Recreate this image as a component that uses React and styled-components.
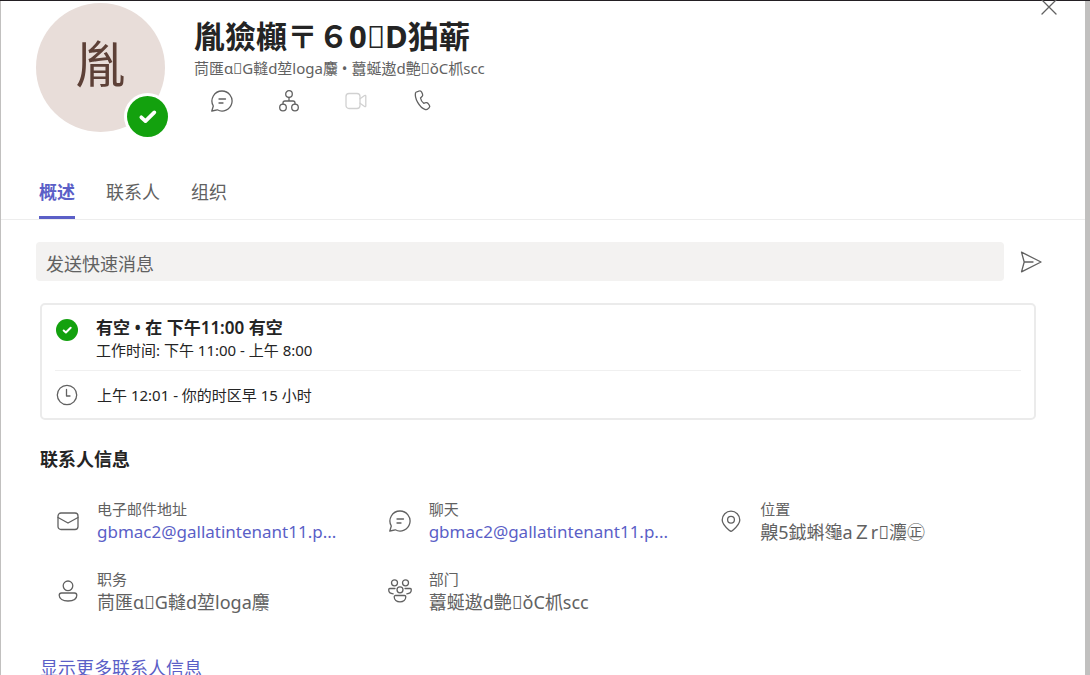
import React from 'react';
import styled, { createGlobalStyle, css } from 'styled-components';

const Global = createGlobalStyle`
  *, *::before, *::after { box-sizing: border-box; }
  html, body { margin: 0; height: 100%; }
  body {
    overflow: hidden;
    background: #c1c0bf;
    color: #242424;
    font-family: "Noto Sans", "Noto Sans CJK SC", sans-serif;
  }
  #root { height: 100%; }
  button, input { font: inherit; }
  h1, h2, p, dl, dt, dd { margin: 0; }
`;

const Backdrop = styled.div`
  min-height: 100%;
  display: flex;
  border-top: 1px solid #231f23;
  padding: 0 5px 0 1px;
`;

const Card = styled.main`
  flex: 1;
  min-width: 0;
  background: #fff;
`;

const Header = styled.header`
  display: flex;
  align-items: flex-start;
  padding: 2px 24px 0 35px;
`;

const Avatar = styled.div`
  position: relative;
  flex: none;
  width: 129px;
  height: 129px;
  border-radius: 50%;
  background: #e8ddd9;
  color: #5d4037;
  font-size: 50px;
  line-height: 122px;
  text-align: center;
`;

const Presence = styled.span`
  position: absolute;
  right: -6px;
  bottom: -8px;
  width: 47px;
  height: 47px;
  padding: 3px;
  border-radius: 50%;
  background: #fff;
  svg { display: block; }
`;

const Identity = styled.div`
  flex: 1;
  min-width: 0;
  padding: 12px 0 0 29px;
`;

const Name = styled.h1`
  font-size: 31px;
  line-height: 42px;
  font-weight: 700;
  white-space: nowrap;
`;

const Role = styled.p`
  font-size: 15px;
  line-height: 22px;
  color: #616161;
  white-space: nowrap;
`;

const Actions = styled.div`
  display: flex;
  gap: 43px;
  padding: 10px 0 0 16px;
`;

const IconButton = styled.button`
  display: block;
  flex: none;
  padding: 0;
  border: 0;
  background: none;
  color: ${(p) => (p.disabled ? '#d1d1d1' : '#616161')};
  svg { display: block; }
`;

const CloseButton = styled(IconButton)`
  margin-top: -8px;
`;

const Tabs = styled.nav`
  display: flex;
  gap: 31px;
  margin-top: 45px;
  padding: 0 38px;
  border-bottom: 1px solid #ededed;
`;

const Tab = styled.button`
  height: 42px;
  padding: 0 0 9px;
  border: 0;
  border-bottom: 3px solid transparent;
  background: none;
  color: #616161;
  font-size: 18px;
  line-height: 26px;
  ${(p) => p.$active && css`
    color: #5b5fc7;
    border-color: #5b5fc7;
    font-weight: 700;
  `}
`;

const Body = styled.div`
  padding: 22px 0 0 35px;
`;

const Composer = styled.form`
  display: flex;
  align-items: center;
  gap: 15px;
  padding-right: 42px;
`;

const MessageInput = styled.input`
  flex: 1;
  min-width: 0;
  height: 39px;
  padding: 4px 10px 0;
  border: 0;
  border-radius: 4px;
  background: #f3f2f1;
  color: #242424;
  font-size: 18px;
  &::placeholder { color: #616161; opacity: 1; }
`;

const Status = styled.section`
  margin: 22px 49px 0 4px;
  padding: 0 13px;
  border: 2px solid #ebebeb;
  border-radius: 5px;
`;

const StatusRow = styled.div`
  display: flex;
  gap: 18px;
  padding: ${(p) => (p.$divided ? '13px 0 11px' : '12px 0 9px 1px')};
  border-top: ${(p) => (p.$divided ? '1px solid #f0f0f0' : '0')};
  svg { flex: none; display: block; margin-top: ${(p) => (p.$divided ? '-1px' : '2px')}; color: #616161; }
`;

const StatusTitle = styled.p`
  font-size: 17px;
  line-height: 22px;
  font-weight: 600;
`;

const StatusText = styled.p`
  font-size: 15px;
  line-height: 22px;
`;

const SectionTitle = styled.h2`
  margin: 26px 0 0 4px;
  font-size: 18px;
  line-height: 26px;
  font-weight: 700;
`;

const Details = styled.dl`
  display: grid;
  grid-template-columns: repeat(3, minmax(0, 1fr));
  row-gap: 24px;
  padding: 26px 34px 0 20px;
`;

const Detail = styled.div`
  display: flex;
  gap: 17px;
  > svg { flex: none; display: block; margin-top: 11px; color: #616161; }
`;

const DetailText = styled.div`
  flex: 1;
  min-width: 0;
`;

const Label = styled.dt`
  font-size: 15px;
  line-height: 22px;
  color: #616161;
`;

const Value = styled.dd`
  font-size: ${(p) => (p.$link ? '17px' : '18px')};
  line-height: 24px;
  color: #616161;
  white-space: nowrap;
`;

const Link = styled.a`
  color: #5b5fc7;
  text-decoration: none;
`;

const MoreLink = styled(Link)`
  display: inline-block;
  margin: 41px 0 0 4px;
  font-size: 18px;
  line-height: 26px;
`;

const Icon = ({ size = 24, children }) => (
  <svg width={size} height={size} viewBox="0 0 24 24" fill="none" stroke="currentColor"
    strokeWidth="1.3" strokeLinecap="round" strokeLinejoin="round" aria-hidden="true">
    {children}
  </svg>
);

const ChatIcon = () => (
  <Icon>
    <path d="M12 2a10 10 0 1 1-4.7 18.8L1.800 22l1.500-5A10 10 0 0 1 12 2z" />
    <path d="M9 10h6.500M9 14h4" />
  </Icon>
);
const OrgIcon = () => (
  <Icon>
    <circle cx="12" cy="5" r="3.3" /><circle cx="6" cy="18.5" r="3.3" /><circle cx="18" cy="18.5" r="3.3" />
    <path d="M12 8.3V12M6 15.2V14a2 2 0 0 1 2-2h8a2 2 0 0 1 2 2v1.2" />
  </Icon>
);
const VideoIcon = () => (
  <Icon>
    <rect x="2" y="4.5" width="14" height="15" rx="3" />
    <path d="M16 9.8l4.600-3.300c.6-.4 1.200-.1 1.200.6v9.800c0 .7-.6 1-1.200.6L16 14.200" />
  </Icon>
);
const PhoneIcon = () => (
  <Icon>
    <path d="M7.1 2.4 8.2 2c1-.3 2 .2 2.4 1.1l.9 2c.4.9.2 1.8-.5 2.5L9.5 9c.3 1.700 1.800 4.200 3.200 5.300l2-.6c.9-.3 1.800 0 2.400.8l1.200 1.700c.6.8.5 1.900-.2 2.600l-.9.8c-.9.9-2.200 1.200-3.300.8-3-1-5.300-3.700-7.200-7-1.900-3.300-2.800-6.600-2.200-9.500.3-1.200 1.300-1.200 2.600-1.500z" />
  </Icon>
);
const SendIcon = () => (
  <Icon><path d="M2.500 2.200 22 12 2.500 21.800 5.200 12zM5.200 12H14" /></Icon>
);
const CloseIcon = () => (
  <Icon><path d="M5 5l14 14M19 5 5 19" /></Icon>
);
const ClockIcon = () => (
  <Icon><circle cx="12" cy="12" r="9.700" /><path d="M11.500 6.500V13H15" /></Icon>
);
const MailIcon = () => (
  <Icon><rect x="2" y="4" width="20" height="16.500" rx="3" /><path d="M2 8.500 12 14l10-5.500" /></Icon>
);
const PinIcon = () => (
  <Icon>
    <path d="M12 2.200a8.800 8.800 0 0 1 8.800 8.800c0 4.300-3.300 7-7.300 10.600a2.200 2.200 0 0 1-3 0C6.500 18 3.200 15.300 3.200 11A8.800 8.800 0 0 1 12 2.200z" />
    <circle cx="12" cy="10.700" r="3.400" />
  </Icon>
);
const PersonIcon = () => (
  <Icon>
    <circle cx="12" cy="6.800" r="4.800" />
    <path d="M5.500 14h13a2.300 2.300 0 0 1 2.300 2.300c0 3.700-3.800 5.700-8.800 5.700s-8.800-2-8.800-5.700A2.300 2.300 0 0 1 5.500 14z" />
  </Icon>
);
const PeopleIcon = () => (
  <Icon>
    <circle cx="6.500" cy="3.800" r="3" /><circle cx="17.500" cy="3.800" r="3" /><circle cx="12" cy="10.800" r="3" />
    <path d="M7 9.500H1.800A1.300 1.300 0 0 0 .7 10.800c0 2.200 1.800 3.900 4.500 4M17 9.500h5.200a1.300 1.300 0 0 1 1.100 1.300c0 2.200-1.800 3.900-4.500 4M7.500 16.500h9a1.300 1.300 0 0 1 1.300 1.300c0 3-2.400 5-5.800 5s-5.800-2-5.800-5a1.300 1.300 0 0 1 1.300-1.300z" />
  </Icon>
);
const AvailableIcon = ({ size = 22 }) => (
  <svg width={size} height={size} viewBox="0 0 24 24" fill="none" aria-hidden="true">
    <circle cx="12" cy="12" r="12" fill="#13a10e" />
    <path d="M8.400 12.500 10.800 14.700 16 9.600" stroke="#fff" strokeWidth="2.200" strokeLinecap="round" strokeLinejoin="round" />
  </svg>
);

const title = '茼匯ɑ\uE000G䡫d堃loga䴩';
const department = '䖀蜒遨d艶\uE000ǒC枛scc';
const email = 'gbmac2@gallatintenant11.p...';

const details = [
  { icon: MailIcon, label: '电子邮件地址', value: email, href: '#email' },
  { icon: ChatIcon, label: '聊天', value: email, href: '#chat' },
  { icon: PinIcon, label: '位置', value: '齅5鉞蝌䶱aＺr\uE000灋㊣' },
  { icon: PersonIcon, label: '职务', value: title },
  { icon: PeopleIcon, label: '部门', value: department },
];

export default function App() {
  return (
    <>
      <Global />
      <Backdrop>
        <Card>
          <Header>
            <Avatar>
              胤
              <Presence><AvailableIcon size={41} /></Presence>
            </Avatar>
            <Identity>
              <Name>胤獫㰜〒６0{'\uE000'}D狛蕲</Name>
              <Role>{title} • {department}</Role>
              <Actions>
                <IconButton aria-label="聊天"><ChatIcon /></IconButton>
                <IconButton aria-label="组织"><OrgIcon /></IconButton>
                <IconButton aria-label="视频通话" disabled><VideoIcon /></IconButton>
                <IconButton aria-label="音频通话"><PhoneIcon /></IconButton>
              </Actions>
            </Identity>
            <CloseButton aria-label="关闭"><CloseIcon /></CloseButton>
          </Header>
          <Tabs>
            <Tab $active>概述</Tab>
            <Tab>联系人</Tab>
            <Tab>组织</Tab>
          </Tabs>
          <Body>
            <Composer onSubmit={(e) => e.preventDefault()}>
              <MessageInput type="text" aria-label="发送快速消息" placeholder="发送快速消息" />
              <IconButton type="submit" aria-label="发送"><SendIcon /></IconButton>
            </Composer>
            <Status>
              <StatusRow>
                <AvailableIcon />
                <div>
                  <StatusTitle>有空 • 在 下午11:00 有空</StatusTitle>
                  <StatusText>工作时间: 下午 11:00 - 上午 8:00</StatusText>
                </div>
              </StatusRow>
              <StatusRow $divided>
                <ClockIcon />
                <StatusText>上午 12:01 - 你的时区早 15 小时</StatusText>
              </StatusRow>
            </Status>
            <SectionTitle>联系人信息</SectionTitle>
            <Details>
              {details.map(({ icon: DetailIcon, label, value, href }) => (
                <Detail key={label}>
                  <DetailIcon />
                  <DetailText>
                    <Label>{label}</Label>
                    <Value $link={Boolean(href)}>{href ? <Link href={href}>{value}</Link> : value}</Value>
                  </DetailText>
                </Detail>
              ))}
            </Details>
            <MoreLink href="#more">显示更多联系人信息</MoreLink>
          </Body>
        </Card>
      </Backdrop>
    </>
  );
}
